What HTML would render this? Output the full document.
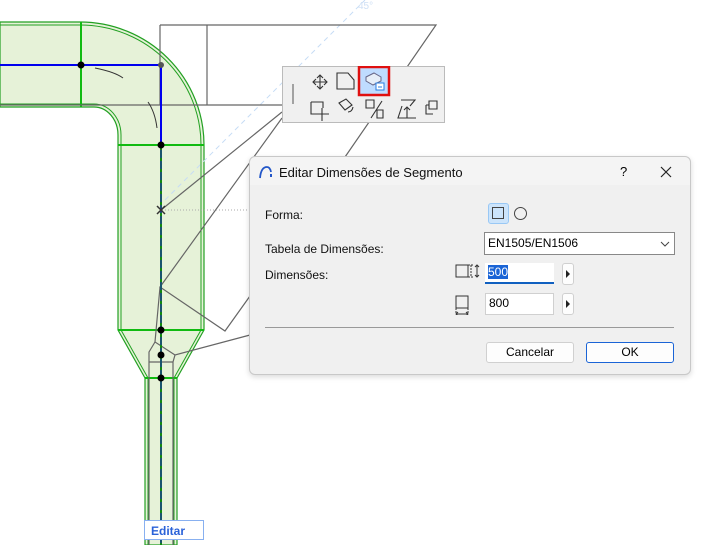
<!DOCTYPE html>
<html><head><meta charset="utf-8"><style>
body{margin:0;width:701px;height:545px;overflow:hidden;background:#fff;font-family:"Liberation Sans","DejaVu Sans",sans-serif;position:relative}
.abs{position:absolute}
.dlg{left:249px;top:156px;width:440px;height:217px;background:#f0f0f0;border:1px solid #c8c8c8;border-radius:6px;box-shadow:0 2px 6px rgba(0,0,0,.15)}
.t{font-size:12px;color:#111}
.inp{background:#fff;border:1px solid #d0d0d0;font-size:12px;box-sizing:border-box;padding:2px 3px}
.btn{background:#fdfdfd;border:1px solid #d0d0d0;border-radius:3px;font-size:12px;text-align:center;box-sizing:border-box;line-height:18px}
</style></head><body>
<svg class="abs" style="left:0;top:0" width="701" height="545">
<path d="M0,22 L80,22 A124,123 0 0 1 204,145 L204,330 L177,378 L177,545 L145,545 L145,378 L118,330 L118,135 A24,28 0 0 0 94,107 L0,107 Z" fill="#e6f2d8" stroke="#22a022" stroke-width="1.2"/>
<path d="M0,25 L80,25 A121,120 0 0 1 201,145 L201,330 L174,378 L174,545 M148,545 L148,378 L121,330 L121,135 A27,31 0 0 0 94,104 L0,104" fill="none" stroke="#22a022" stroke-width="1"/>
<g stroke="#11bb11" stroke-width="2"><line x1="81" y1="22" x2="81" y2="107"/><line x1="118" y1="145" x2="204" y2="145"/><line x1="118" y1="330" x2="204" y2="330"/><line x1="145" y1="378" x2="177" y2="378"/></g>
<path d="M165,200 L365,0" stroke="#c6dcf5" stroke-dasharray="5 4"/>
<g stroke="#666" stroke-width="1.2" fill="none">
<path d="M160,25 L436,25 L345,157"/><path d="M160,25 L160,105 M207,25 L207,105 M0,105 L282,105"/>
<path d="M282,112 L161,210"/><path d="M282,118 L160,287 L225,331 L250,296"/>
<path d="M160,287 L155,342 L175,355 L250,335"/>
<path d="M155,342 L149,352 L149,545 M175,355 L173,362 L173,545 M149,362 L173,362"/>
</g>
<path d="M162,210 L250,210" stroke="#aaa" stroke-dasharray="1 2"/>
<path d="M0,65 L161,65 L161,145" stroke="#0000ee" stroke-width="2" fill="none"/>
<path d="M161,145 L161,545" stroke="#118811" stroke-width="2"/>
<path d="M161,150 L161,545" stroke="#2222cc" stroke-width="1" stroke-dasharray="8 3"/>
<path d="M95,68 Q115,72 123,78 M148,102 Q155,112 157,128" stroke="#333" fill="none"/>
<g fill="#000"><circle cx="81" cy="65" r="3.5"/><circle cx="161" cy="145" r="3.5"/><circle cx="161" cy="330" r="3.5"/><circle cx="161" cy="355" r="3.5"/><circle cx="161" cy="378" r="3.5"/></g>
<circle cx="161" cy="65" r="3" fill="#555"/>
<path d="M157,206 L165,214 M165,206 L157,214" stroke="#333" stroke-width="1.5"/>
<text x="358" y="9" font-size="10" fill="#cfe0f5" font-family="Liberation Sans">45°</text>
</svg>
<div class="abs" style="left:282px;top:66px;width:163px;height:57px;background:#f0f0f0;border:1px solid #bbb;box-sizing:border-box"></div>
<svg class="abs" style="left:282px;top:66px" width="163" height="57">
<line x1="11" y1="18" x2="11" y2="38" stroke="#555"/>
<rect x="77" y="1" width="30" height="28" fill="#bfdcff" stroke="#e01010" stroke-width="2.5"/>
<g stroke="#333" fill="none" stroke-width="1.1">
<path d="M38,9 L38,23 M31,16 L45,16 M35,12 L38,9 L41,12 M35,20 L38,23 L41,20 M34,13 L31,16 L34,19 M42,13 L45,16 L42,19"/>
<path d="M55,7 L66,7 L72,14 L72,23 L55,23 Z"/>
<path d="M29,36 L41,36 L41,42 M29,36 L29,48 L34,48 M40,42 L40,55 M34,48 L47,48"/>
<path d="M57,37 L64,33 L70,39 L63,44 Z M66,46 Q70,46 71,41"/>
<path d="M84,34 L92,34 L92,42 L84,42 Z M89,52 L100,35 M95,44 L101,44 L101,52 L95,52 Z"/>
<path d="M119,34 L133,34 L128,40 M120,40 L116,52 L134,52 M125,52 L125,41 M122,44 L125,41 L128,44"/>
<path d="M147,35 L155,35 L155,43 L147,43 Z M144,39 L144,48 L151,48 M144,39 L147,39"/>
</g>
<g stroke="#668" fill="#e6eef8" stroke-width="1"><path d="M84,11 L92,7 L99,11 L99,15 L91,19 L84,15 Z"/></g>
<rect x="94" y="17" width="8" height="7" fill="#fff" stroke="#2a7de1"/><line x1="96" y1="21" x2="100" y2="21" stroke="#2a7de1"/>
</svg>
<div class="abs dlg">
<div class="abs" style="left:0;top:0;width:440px;height:28px;background:#f4f4f4;border-radius:6px 6px 0 0"></div>
<svg class="abs" style="left:8px;top:7px" width="16" height="16"><path d="M2,14 Q3,3 9,3 Q12,3 13,8" stroke="#2256c8" stroke-width="1.8" fill="none"/><rect x="12" y="10" width="2" height="3" fill="#2256c8"/></svg>
<div class="abs" style="left:29px;top:8px;font-size:13px;color:#111">Editar Dimensões de Segmento</div>
<div class="abs" style="left:370px;top:7px;font-size:13px">?</div>
<svg class="abs" style="left:410px;top:9px" width="12" height="12"><path d="M1,1 L11,11 M11,1 L1,11" stroke="#222" stroke-width="1.2"/></svg>
<div class="abs t" style="left:15px;top:51px">Forma:</div>
<div class="abs" style="left:238px;top:46px;width:21px;height:21px;background:#cce4fb;border:1px solid #99c8f5;border-radius:3px;box-sizing:border-box"></div>
<div class="abs" style="left:242px;top:50px;width:12px;height:12px;border:1px solid #444;box-sizing:border-box"></div>
<div class="abs" style="left:264px;top:50px;width:13px;height:13px;border:1px solid #444;border-radius:50%;box-sizing:border-box"></div>
<div class="abs t" style="left:15px;top:85px">Tabela de Dimensões:</div>
<div class="abs inp" style="left:234px;top:75px;width:191px;height:23px;border-color:#888;line-height:17px">EN1505/EN1506</div>
<svg class="abs" style="left:410px;top:83px" width="10" height="8"><path d="M1,2 L5,6 L9,2" stroke="#444" fill="none"/></svg>
<div class="abs t" style="left:15px;top:111px">Dimensões:</div>
<svg class="abs" style="left:205px;top:106px" width="26" height="52"><g stroke="#333" fill="none"><rect x="1" y="2" width="12" height="12"/><path d="M13,2 L18,2 M13,14 L18,14 M16,2 L16,14" stroke-dasharray="2 1"/><path d="M22,2 L22,14 M20,4 L22,2 L24,4 M20,12 L22,14 L24,12"/><rect x="1" y="33" width="12" height="12"/><path d="M1,45 L1,50 M13,45 L13,50" stroke-dasharray="2 1"/><path d="M1,51 L13,51 M3,49 L1,51 L3,53 M11,49 L13,51 L11,53"/></g></svg>
<div class="abs inp" style="left:235px;top:106px;width:69px;height:21px;border:none;border-bottom:2px solid #1060c0"><span style="background:#1a64d6;color:#fff">500</span></div>
<div class="abs inp" style="left:235px;top:136px;width:69px;height:22px">800</div>
<div class="abs btn" style="left:312px;top:106px;width:12px;height:22px"></div>
<div class="abs btn" style="left:312px;top:136px;width:12px;height:22px"></div>
<svg class="abs" style="left:315px;top:113px" width="6" height="40"><path d="M1,0 L5,4 L1,8 Z M1,30 L5,34 L1,38 Z" fill="#222"/></svg>
<div class="abs" style="left:15px;top:170px;width:409px;height:1px;background:#999"></div>
<div class="abs btn" style="left:236px;top:185px;width:88px;height:21px">Cancelar</div>
<div class="abs btn" style="left:336px;top:185px;width:88px;height:21px;border:1px solid #1a64d6">OK</div>
</div>
<div class="abs" style="left:144px;top:520px;width:60px;height:20px;background:#fff;border:1px solid #88b0f0;box-sizing:border-box;color:#2a62d8;font-size:12px;font-weight:bold;padding:3px 0 0 6px">Editar</div>
</body></html>
